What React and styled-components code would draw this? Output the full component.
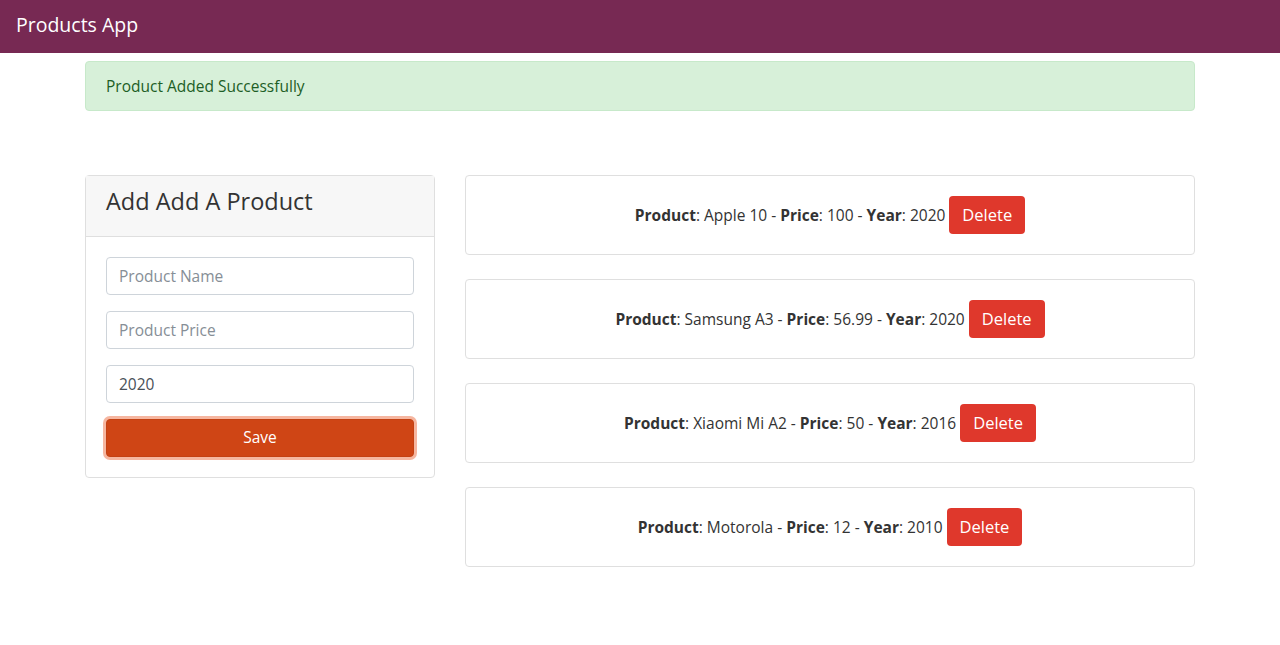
import styled, { createGlobalStyle } from 'styled-components';

const GlobalStyle = createGlobalStyle`
  * { box-sizing: border-box; }
  body {
    margin: 0;
    font-family: "Open Sans", "Noto Sans", sans-serif;
    font-size: 15.5px;
    line-height: 1.5;
    color: #333;
    background: #fff;
  }
`;

const Navbar = styled.nav`
  height: 53px;
  background: #772953;
  display: flex;
  align-items: center;
  padding: 0 16px 4px;
`;

const Brand = styled.span`
  color: #fff;
  font-size: 19.5px;
`;

const Container = styled.div`
  width: 1140px;
  margin: 0 auto;
  padding: 8px 15px 0;
`;

const Alert = styled.div`
  background: #d7f0d9;
  border: 1px solid #c7e9ca;
  color: #1d5e26;
  border-radius: 4px;
  padding: 12px 20px;
  line-height: 24px;
`;

const Row = styled.div`
  display: grid;
  grid-template-columns: 350px 730px;
  column-gap: 30px;
  margin-top: 64px;
  align-items: start;
`;

const Card = styled.div`
  border: 1px solid #dfdfdf;
  border-radius: 4px;
  background: #fff;
`;

const CardHeader = styled.div`
  background: #f7f7f7;
  border-bottom: 1px solid #dfdfdf;
  padding: 0 20px 8px;
  height: 61px;
  display: flex;
  align-items: center;
`;

const Heading = styled.h3`
  margin: 0;
  font-weight: 400;
  font-size: 23.5px;
  color: #333;
`;

const CardBody = styled.div`
  padding: 20px;
  display: flex;
  flex-direction: column;
  gap: 16px;
`;

const Input = styled.input`
  height: 38px;
  border: 1px solid #ced4da;
  border-radius: 4px;
  padding: 0 12px;
  font: inherit;
  color: #495057;
  &::placeholder { color: #868e96; }
`;

const SaveButton = styled.button`
  height: 38px;
  border: 1px solid #c34113;
  border-radius: 4px;
  background: #cf4515;
  color: #fff;
  font: inherit;
  box-shadow: 0 0 0 3px rgba(237, 110, 65, 0.5);
`;

const List = styled.div`
  display: flex;
  flex-direction: column;
  gap: 24px;
`;

const ItemBody = styled.div`
  padding: 20px;
  text-align: center;
`;

const DeleteButton = styled.button`
  height: 38px;
  padding: 0 13px;
  margin-left: 4px;
  border: none;
  border-radius: 4px;
  background: #df382c;
  color: #fff;
  font: inherit;
  font-size: 16.5px;
  vertical-align: baseline;
`;

const products = [
  { name: 'Apple 10', price: '100', year: '2020' },
  { name: 'Samsung A3', price: '56.99', year: '2020' },
  { name: 'Xiaomi Mi A2', price: '50', year: '2016' },
  { name: 'Motorola', price: '12', year: '2010' },
];

export default function App() {
  return (
    <>
      <GlobalStyle />
      <Navbar>
        <Brand>Products App</Brand>
      </Navbar>
      <Container>
        <Alert>Product Added Successfully</Alert>
        <Row>
          <Card>
            <CardHeader>
              <Heading>Add Add A Product</Heading>
            </CardHeader>
            <CardBody>
              <Input placeholder="Product Name" />
              <Input placeholder="Product Price" />
              <Input defaultValue="2020" />
              <SaveButton>Save</SaveButton>
            </CardBody>
          </Card>
          <List>
            {products.map((p) => (
              <Card key={p.name}>
                <ItemBody>
                  <strong>Product</strong>: {p.name} - <strong>Price</strong>: {p.price} -{' '}
                  <strong>Year</strong>: {p.year}
                  <DeleteButton>Delete</DeleteButton>
                </ItemBody>
              </Card>
            ))}
          </List>
        </Row>
      </Container>
    </>
  );
}
